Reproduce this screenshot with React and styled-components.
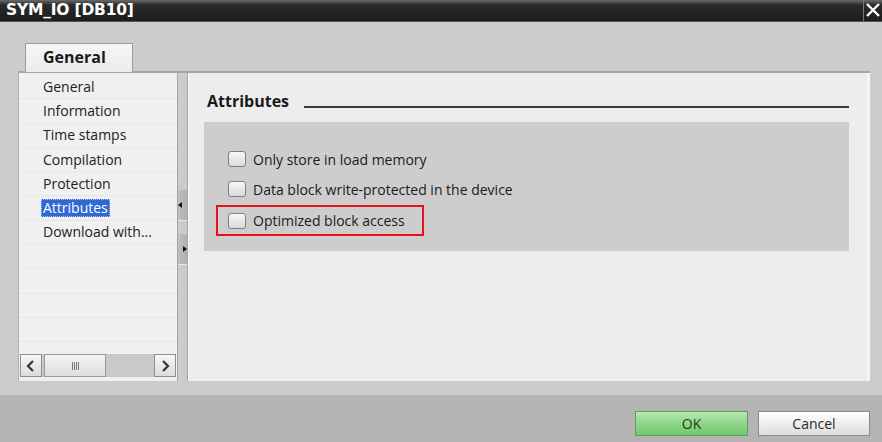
import React from "react";
import styled, { createGlobalStyle } from "styled-components";

const Global = createGlobalStyle`
  html, body { margin: 0; padding: 0; }
  body { font-family: "Open Sans", "DejaVu Sans", sans-serif; background: #b4b4b4; }
  * { box-sizing: border-box; }
`;

const Window = styled.div`
  width: 882px;
  height: 442px;
  display: flex;
  flex-direction: column;
  overflow: hidden;
  background: #cccccc;
`;

const TitleBar = styled.div`
  height: 22px;
  flex: none;
  display: flex;
  align-items: flex-end;
  justify-content: space-between;
  background: linear-gradient(#6a6a6a 0px, #2a2a2a 5px, #1c1c1c 100%);
  border-bottom: 1px solid #555;
`;

const Title = styled.div`
  color: #fff;
  font-weight: 700;
  font-size: 15.5px;
  line-height: 18px;
  padding: 0 0 2px 6px;
  font-family: "DejaVu Sans", sans-serif;
  letter-spacing: -0.2px;
`;

const Close = styled.div`
  width: 19px;
  height: 22px;
  border-left: 1px solid #777;
  display: flex;
  align-items: center;
  justify-content: center;
  color: #fff;
`;

const Body = styled.div`
  flex: 1;
  display: flex;
  flex-direction: column;
  padding: 21px 12px 14px 18px;
`;

const TabRow = styled.div`
  display: flex;
  padding-left: 7px;
  height: 28px;
`;

const Tab = styled.div`
  width: 108px;
  height: 29px;
  border: 1px solid #9c9c9c;
  border-bottom: none;
  background: linear-gradient(#f6f6f6, #ececec);
  font-weight: 700;
  font-size: 16px;
  color: #1a1a1a;
  padding: 2px 0 0 17px;
  position: relative;
  z-index: 1;
`;

const Frame = styled.div`
  flex: 1;
  display: flex;
  border-top: 2px solid #a6a6a6;
  border-left: 1px solid #b0b0b0;
  background: #f0f0f0;
`;

const Sidebar = styled.div`
  width: 158px;
  display: flex;
  flex-direction: column;
  background: #f0f0f0;
`;

const List = styled.div`
  flex: 1;
  display: flex;
  flex-direction: column;
  padding-top: 2px;
`;

const Row = styled.div`
  height: 24.3px;
  flex: none;
  display: flex;
  align-items: center;
  padding-left: 22px;
  border-bottom: 1px solid #e6e6e6;
  font-size: 14px;
  color: #222;
`;

const Label = styled.span`
  padding: 0 2px;
  line-height: 18px;
  ${({ $sel }) =>
    $sel &&
    `
    background: #3068d6;
    color: #fff;
    outline: 1px dotted #a9c0f0;
    outline-offset: -1px;
  `}
`;

const HScroll = styled.div`
  height: 23px;
  margin: 0 1px 4px 1px;
  display: flex;
  align-items: stretch;
  background: #c9c9c9;
  gap: 2px;
`;

const ScrollBtn = styled.div`
  width: 22px;
  border: 1px solid #8e8e8e;
  background: linear-gradient(#f6f6f6, #dcdcdc);
  display: flex;
  align-items: center;
  justify-content: center;
  margin-left: ${({ $right }) => ($right ? "auto" : "0")};
`;

const Thumb = styled.div`
  width: 62px;
  border: 1px solid #999;
  background: linear-gradient(#f4f4f4, #dedede);
  display: flex;
  align-items: center;
  justify-content: center;
`;

const Grip = styled.div`
  width: 7px;
  height: 8px;
  background: repeating-linear-gradient(90deg, #777 0 1px, transparent 1px 2px);
`;

const Splitter = styled.div`
  width: 11px;
  display: flex;
  flex-direction: column;
  background: #cbcbcb;
  border-left: 1px solid #a5a5a5;
  border-right: 1px solid #a5a5a5;
  box-shadow: 1px 0 0 #fafafa;
  padding-top: 117px;
  gap: 13px;
  margin-right: 1px;
`;

const SplitBtn = styled.div`
  height: 31px;
  background: linear-gradient(90deg, #c0c0c0, #b0b0b0);
  border-bottom: 1px solid #e8e8e8;
  display: flex;
  align-items: center;
  justify-content: ${({ $dir }) => ($dir === "left" ? "flex-start" : "flex-end")};
`;

const Tri = styled.div`
  width: 0;
  height: 0;
  border-top: 3px solid transparent;
  border-bottom: 3px solid transparent;
  ${({ $dir }) =>
    $dir === "left" ? "border-right: 4px solid #111;" : "border-left: 4px solid #111;"}
`;

const Content = styled.div`
  flex: 1;
  background: #ededed;
  padding: 17px 18px 0 15px;
  border-right: 3px solid #f6f6f6;
`;

const Heading = styled.div`
  display: flex;
  align-items: flex-end;
  gap: 15px;
  height: 21px;
  padding-left: 3px;
`;

const HeadText = styled.div`
  font-weight: 700;
  font-size: 16px;
  color: #1a1a1a;
  line-height: 20px;
`;

const HeadLine = styled.div`
  flex: 1;
  height: 2px;
  background: #3a3a3a;
  margin-bottom: 3px;
`;

const Group = styled.div`
  margin-top: 11px;
  height: 129px;
  background: #cdcdcd;
  padding: 25px 0 0 12px;
  display: flex;
  flex-direction: column;
  gap: 6px;
`;

const Option = styled.div`
  display: flex;
  align-items: center;
  gap: 7px;
  width: ${({ $hl }) => ($hl ? "208px" : "auto")};
  padding-left: 10px;
  border: 2px solid ${({ $hl }) => ($hl ? "#e3121b" : "transparent")};
  margin-top: ${({ $hl }) => ($hl ? "-2px" : "0")};
  height: ${({ $hl }) => ($hl ? "31px" : "24px")};
  font-size: 14px;
  color: #1a1a1a;
`;

const Check = styled.div`
  width: 18px;
  height: 16px;
  border: 1px solid #7f7f7f;
  border-radius: 3px;
  background: linear-gradient(#f8f8f8, #dadada);
  flex: none;
`;

const Footer = styled.div`
  height: 47px;
  flex: none;
  background: #b4b4b4;
  display: flex;
  justify-content: flex-end;
  align-items: flex-start;
  padding: 16px 12px 0 0;
  gap: 10px;
`;

const Button = styled.div`
  width: ${({ $w }) => $w}px;
  height: 25px;
  display: flex;
  align-items: center;
  justify-content: center;
  font-size: 14px;
  border: 1px solid ${({ $ok }) => ($ok ? "#5d9e5a" : "#8c8c8c")};
  background: ${({ $ok }) =>
    $ok
      ? "linear-gradient(#b6e8b0, #8fd68a 50%, #72c86d)"
      : "linear-gradient(#ffffff, #eeeeee 50%, #dcdcdc)"};
  color: ${({ $ok }) => ($ok ? "#1f3d1f" : "#2a2a2a")};
`;

const Chevron = ({ dir }) => (
  <svg width="10" height="12" viewBox="0 0 10 12">
    <path
      d={dir === "left" ? "M7 1 L2 6 L7 11" : "M3 1 L8 6 L3 11"}
      fill="none"
      stroke="#333"
      strokeWidth="2.2"
    />
  </svg>
);

const items = [
  "General",
  "Information",
  "Time stamps",
  "Compilation",
  "Protection",
  "Attributes",
  "Download with...",
  "",
  "",
  "",
  "",
];

const options = [
  { text: "Only store in load memory" },
  { text: "Data block write-protected in the device" },
  { text: "Optimized block access", hl: true },
];

export default function App() {
  return (
    <>
      <Global />
      <Window>
        <TitleBar>
          <Title>SYM_IO [DB10]</Title>
          <Close>
            <svg width="14" height="14" viewBox="0 0 14 14">
              <path d="M1 1 L13 13 M13 1 L1 13" stroke="#fff" strokeWidth="2.4" />
            </svg>
          </Close>
        </TitleBar>
        <Body>
          <TabRow>
            <Tab>General</Tab>
          </TabRow>
          <Frame>
            <Sidebar>
              <List>
                {items.map((t, i) => (
                  <Row key={i}>
                    {t && <Label $sel={t === "Attributes"}>{t}</Label>}
                  </Row>
                ))}
              </List>
              <HScroll>
                <ScrollBtn>
                  <Chevron dir="left" />
                </ScrollBtn>
                <Thumb>
                  <Grip />
                </Thumb>
                <ScrollBtn $right>
                  <Chevron dir="right" />
                </ScrollBtn>
              </HScroll>
            </Sidebar>
            <Splitter>
              <SplitBtn $dir="left">
                <Tri $dir="left" />
              </SplitBtn>
              <SplitBtn $dir="right">
                <Tri $dir="right" />
              </SplitBtn>
            </Splitter>
            <Content>
              <Heading>
                <HeadText>Attributes</HeadText>
                <HeadLine />
              </Heading>
              <Group>
                {options.map((o) => (
                  <Option key={o.text} $hl={o.hl}>
                    <Check />
                    {o.text}
                  </Option>
                ))}
              </Group>
            </Content>
          </Frame>
        </Body>
        <Footer>
          <Button $ok $w={113}>OK</Button>
          <Button $w={112}>Cancel</Button>
        </Footer>
      </Window>
    </>
  );
}
